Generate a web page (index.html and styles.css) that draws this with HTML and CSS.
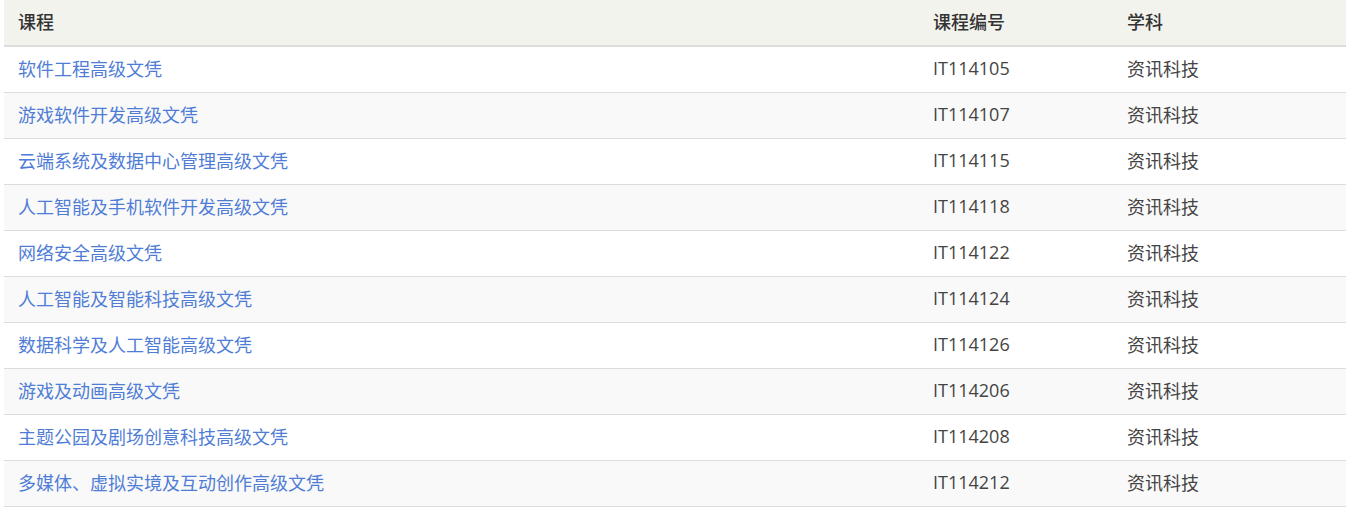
FILE: index.html
```html
<!DOCTYPE html>
<html lang="zh">
<head>
<meta charset="utf-8">
<link rel="stylesheet" href="styles.css">
</head>
<body>
<table class="courses">
  <thead>
    <tr><th class="c1">课程</th><th class="c2">课程编号</th><th class="c3">学科</th></tr>
  </thead>
  <tbody>
    <tr><td><a href="#">软件工程高级文凭</a></td><td>IT114105</td><td>资讯科技</td></tr>
    <tr><td><a href="#">游戏软件开发高级文凭</a></td><td>IT114107</td><td>资讯科技</td></tr>
    <tr><td><a href="#">云端系统及数据中心管理高级文凭</a></td><td>IT114115</td><td>资讯科技</td></tr>
    <tr><td><a href="#">人工智能及手机软件开发高级文凭</a></td><td>IT114118</td><td>资讯科技</td></tr>
    <tr><td><a href="#">网络安全高级文凭</a></td><td>IT114122</td><td>资讯科技</td></tr>
    <tr><td><a href="#">人工智能及智能科技高级文凭</a></td><td>IT114124</td><td>资讯科技</td></tr>
    <tr><td><a href="#">数据科学及人工智能高级文凭</a></td><td>IT114126</td><td>资讯科技</td></tr>
    <tr><td><a href="#">游戏及动画高级文凭</a></td><td>IT114206</td><td>资讯科技</td></tr>
    <tr><td><a href="#">主题公园及剧场创意科技高级文凭</a></td><td>IT114208</td><td>资讯科技</td></tr>
    <tr><td><a href="#">多媒体、虚拟实境及互动创作高级文凭</a></td><td>IT114212</td><td>资讯科技</td></tr>
  </tbody>
</table>
</body>
</html>
```
FILE: styles.css
```css
html, body {
  margin: 0;
  padding: 0;
  background: #fff;
}
body {
  padding-left: 4px;
  font-family: "Open Sans", "Noto Sans CJK SC", sans-serif;
  font-size: 18px;
  color: #444;
}
.courses {
  width: 1342px;
  border-collapse: collapse;
  table-layout: fixed;
}
.courses th, .courses td {
  text-align: left;
  padding: 0 14px 4px 14px;
  height: 41px;
  vertical-align: middle;
  white-space: nowrap;
}
.courses th {
  background: #f3f3ee;
  border-bottom: 2px solid #dcdcdc;
  font-weight: 500;
  color: #333;
}
.courses td {
  border-bottom: 1px solid #dcdcdc;
  font-weight: 400;
}
.courses tbody tr:nth-child(even) td {
  background: #f9f9f9;
}
.c1 { width: 887px; }
.c2 { width: 166px; }
.c3 { width: auto; }
.courses a {
  color: #4f7dd6;
  text-decoration: none;
}
```
